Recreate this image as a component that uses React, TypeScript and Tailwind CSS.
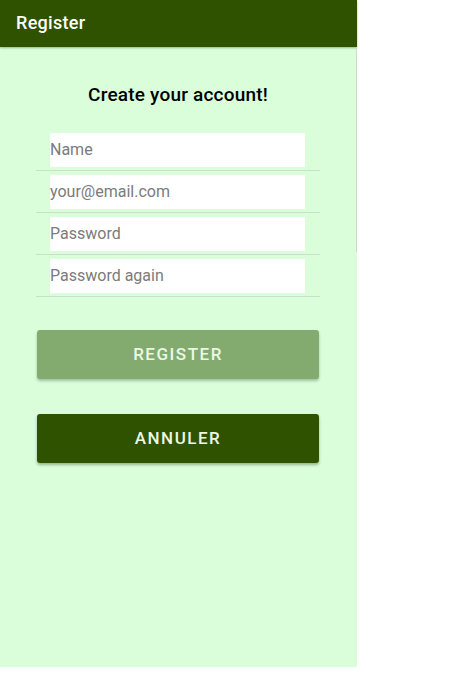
import React from "react";

const fields = ["Name", "your@email.com", "Password", "Password again"];

export default function App() {
  return (
    <div className="w-[474px] h-[681px] bg-white font-['Roboto',sans-serif]">
      <div className="w-[357px] h-[667px] bg-[#d9fed9] flex flex-col">
        {/* App bar */}
        <header className="h-[47px] shrink-0 bg-[#2f5200] flex items-center px-4 pb-[2px] shadow-[0_1px_2px_rgba(0,0,0,0.3)]">
          <h1 className="text-[18px] font-medium tracking-[0.3px] text-white">Register</h1>
        </header>

        <div className="flex-1 flex">
          <div className="flex-1 flex flex-col">
            <h2 className="mt-[35px] text-center text-[19px] font-medium text-black leading-[26px] tracking-[0.2px]">
              Create your account!
            </h2>

            <div className="mt-[21px] ml-[36px] w-[284px] flex flex-col">
              {fields.map((f) => (
                <div key={f} className="pt-[4px] border-b border-[#c8e0c8]">
                  <div className="ml-[14px] mr-[15px] h-[34px] bg-white flex items-center mb-[3px]">
                    <span className="text-[16px] text-[#7b7b7b]">{f}</span>
                  </div>
                </div>
              ))}
            </div>

            <div className="mt-[33px] mx-[37px] flex flex-col gap-[35px]">
              <button className="h-[49px] rounded-[3px] bg-[#84ab6f] text-[#eaf8e4] text-[17px] font-medium tracking-[1.5px] shadow-[0_2px_3px_rgba(0,0,0,0.25)]">
                REGISTER
              </button>
              <button className="h-[49px] rounded-[3px] bg-[#2f5200] text-[#eaf8e4] text-[17px] font-medium tracking-[1.5px] shadow-[0_2px_3px_rgba(0,0,0,0.3)]">
                ANNULER
              </button>
            </div>
          </div>
          <div className="w-px h-[205px] bg-[#cfd8cf]" />
        </div>
      </div>
    </div>
  );
}
